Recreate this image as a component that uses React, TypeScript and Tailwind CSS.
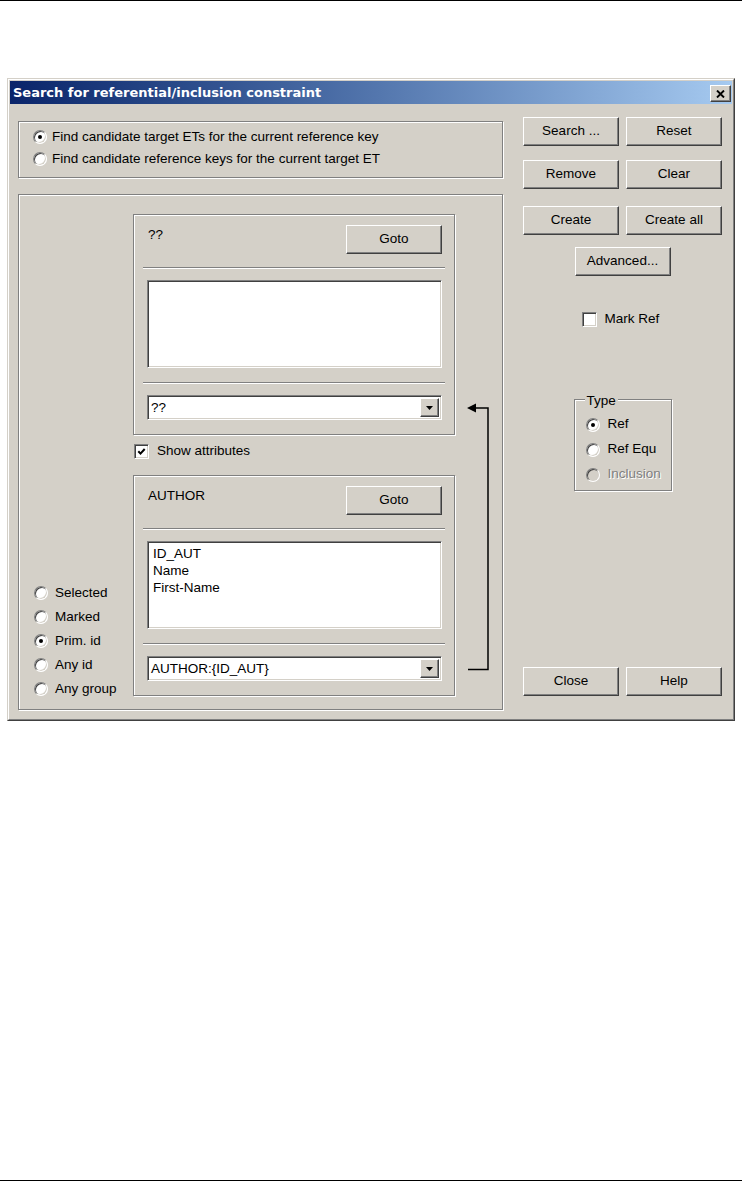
import React from "react";

// classic 3D borders
const raised =
  "border border-white border-r-[#404040] border-b-[#404040] shadow-[inset_-1px_-1px_0_#808080] bg-[#d4d0c8]";
const sunken =
  "border border-[#808080] border-r-white border-b-white shadow-[inset_1px_1px_0_#404040,inset_-1px_-1px_0_#d4d0c8]";
const etched = "border border-[#808080] shadow-[inset_1px_1px_0_#fff,1px_1px_0_#fff]";

const Btn: React.FC<{ children: React.ReactNode; className?: string }> = ({ children, className = "" }) => (
  <button
    type="button"
    className={`${raised} flex h-[29px] w-[96px] shrink-0 items-center justify-center text-[13.5px] text-black ${className}`}
  >
    {children}
  </button>
);

const Radio: React.FC<{ checked?: boolean; disabled?: boolean }> = ({ checked = false, disabled = false }) => (
  <span
    className={`flex h-[14px] w-[14px] shrink-0 items-center justify-center rounded-full border border-[#808080] border-r-white border-b-white shadow-[inset_1px_1px_0_#404040,inset_-1px_-1px_0_#d4d0c8] ${
      disabled ? "bg-[#d4d0c8]" : "bg-white"
    }`}
  >
    {checked && <span className="h-[4px] w-[4px] rounded-full bg-black" />}
  </span>
);

const Check: React.FC<{ checked?: boolean }> = ({ checked = false }) => (
  <span className={`${sunken} flex h-[15px] w-[15px] shrink-0 items-center justify-center bg-white`}>
    {checked && (
      <svg width="9" height="9" viewBox="0 0 9 9">
        <polyline points="1.3,4.2 3.5,6.6 7.7,2" fill="none" stroke="#000" strokeWidth="2" />
      </svg>
    )}
  </span>
);

const Combo: React.FC<{ value: string }> = ({ value }) => (
  <div className={`${sunken} ml-[13px] mt-[11px] flex h-[25px] w-[295px] items-stretch bg-white p-[2px]`}>
    <span className="flex flex-1 items-center pl-[1px] leading-none">{value}</span>
    <span className={`${raised} flex w-[19px] items-center justify-center`}>
      <svg width="7" height="4" viewBox="0 0 7 4">
        <polygon points="0,0 7,0 3.5,4" fill="#000" />
      </svg>
    </span>
  </div>
);

const Separator: React.FC = () => (
  <div className="ml-[9px] mr-[9px] h-[2px] border-t border-b border-t-[#808080] border-b-white" />
);

const Panel: React.FC<{ title: string; items: string[]; combo: string }> = ({ title, items, combo }) => (
  <div className={`${etched} flex h-[221px] w-[322px] shrink-0 flex-col`}>
    <div className="flex items-start justify-between pl-[14px] pr-[12px] pt-[10px]">
      <span className="mt-[2px] leading-[16px]">{title}</span>
      <Btn className="w-[95px]">Goto</Btn>
    </div>
    <div className="mt-[13px]">
      <Separator />
    </div>
    <div className={`${sunken} ml-[13px] mt-[11px] h-[88px] w-[295px] bg-white pl-[5px] pt-[3px]`}>
      {items.map((it) => (
        <div key={it} className="leading-[17px]">
          {it}
        </div>
      ))}
    </div>
    <div className="mt-[14px]">
      <Separator />
    </div>
    <Combo value={combo} />
  </div>
);

export default function App() {
  return (
    <div className="flex h-[1181px] w-full flex-col bg-white font-['Liberation_Sans',Arial,sans-serif] text-[13.5px] text-black">
      <div className="h-[1px] w-full shrink-0 bg-black" />

      {/* Dialog window */}
      <div className="ml-[7px] mt-[77px] w-[728px] border border-[#d4d0c8] border-r-[#404040] border-b-[#404040]">
        <div className="border border-white border-r-[#808080] border-b-[#808080] bg-[#d4d0c8] p-[1px]">
          {/* Title bar */}
          <div className="flex h-[23px] items-center justify-between bg-gradient-to-r from-[#0a246a] to-[#a6caf0] pl-[3px] pr-[1px]">
            <span className="font-['DejaVu_Sans',sans-serif] text-[13px] font-bold text-white">
              Search for referential/inclusion constraint
            </span>
            <button type="button" className={`${raised} mt-[2px] flex h-[17px] w-[21px] items-center justify-center`}>
              <svg width="9" height="8" viewBox="0 0 9 8">
                <path d="M1 0.5 L8 7.5 M8 0.5 L1 7.5" stroke="#000" strokeWidth="1.9" />
              </svg>
            </button>
          </div>

          {/* Body */}
          <div className="flex pb-[8px] pl-[8px] pr-[10px]">
            {/* Left column */}
            <div className="flex w-[485px] shrink-0 flex-col pt-[17px]">
              <div className={`${etched} flex h-[57px] flex-col pl-[14px] pt-[4px]`}>
                <div className="flex h-[22px] items-center gap-[5px]">
                  <Radio checked />
                  <span>Find candidate target ETs for the current reference key</span>
                </div>
                <div className="flex h-[22px] items-center gap-[5px]">
                  <Radio />
                  <span>Find candidate reference keys for the current target ET</span>
                </div>
              </div>

              <div className={`${etched} mt-[16px] flex h-[516px]`}>
                {/* selection radios */}
                <div className="flex w-[114px] shrink-0 flex-col justify-end pb-[8px] pl-[15px]">
                  {[
                    ["Selected", false],
                    ["Marked", false],
                    ["Prim. id", true],
                    ["Any id", false],
                    ["Any group", false],
                  ].map(([label, on]) => (
                    <div key={label as string} className="flex h-[24px] items-center gap-[7px]">
                      <Radio checked={on as boolean} />
                      <span>{label as string}</span>
                    </div>
                  ))}
                </div>

                {/* panels */}
                <div className="flex w-[322px] shrink-0 flex-col pt-[19px]">
                  <Panel title="??" items={[]} combo="??" />
                  <div className="flex h-[40px] items-center gap-[8px] pb-[8px] pl-[1px]">
                    <Check checked />
                    <span>Show attributes</span>
                  </div>
                  <Panel title="AUTHOR" items={["ID_AUT", "Name", "First-Name"]} combo="AUTHOR:{ID_AUT}" />
                </div>

                {/* link arrow */}
                <div className="w-[47px] shrink-0 pt-[19px]">
                  <svg width="47" height="482" viewBox="0 0 47 482">
                    <polygon points="12,194 21,189.5 21,198.5" fill="#000" />
                    <path d="M20 194 H33 V455.5 H13" fill="none" stroke="#000" strokeWidth="1.5" />
                  </svg>
                </div>
              </div>
            </div>

            {/* Right column */}
            <div className="ml-[20px] flex w-[199px] shrink-0 flex-col items-center pt-[13px]">
              <div className="flex gap-[7px]">
                <Btn>Search ...</Btn>
                <Btn>Reset</Btn>
              </div>
              <div className="mt-[14px] flex gap-[7px]">
                <Btn>Remove</Btn>
                <Btn>Clear</Btn>
              </div>
              <div className="mt-[17px] flex gap-[7px]">
                <Btn>Create</Btn>
                <Btn>Create all</Btn>
              </div>
              <Btn className="mt-[12px]">Advanced...</Btn>

              <div className="mt-[35px] flex h-[16px] items-center gap-[8px] pr-[4px]">
                <Check />
                <span>Mark Ref</span>
              </div>

              <div className={`${etched} relative mt-[72px] flex h-[92px] w-[98px] flex-col pl-[11px] pt-[12px]`}>
                <span className="absolute -top-[7px] left-[10px] bg-[#d4d0c8] px-[2px] leading-[16px]">Type</span>
                <div className="flex h-[25px] items-center gap-[8px]">
                  <Radio checked />
                  <span>Ref</span>
                </div>
                <div className="flex h-[25px] items-center gap-[8px]">
                  <Radio />
                  <span>Ref Equ</span>
                </div>
                <div className="flex h-[25px] items-center gap-[8px]">
                  <Radio disabled />
                  <span className="text-[#808080] [text-shadow:1px_1px_0_#fff]">Inclusion</span>
                </div>
              </div>

              <div className="mt-[176px] flex gap-[7px]">
                <Btn>Close</Btn>
                <Btn>Help</Btn>
              </div>
            </div>
          </div>
        </div>
      </div>

      <div className="mt-auto h-[1px] w-full shrink-0 bg-black" />
    </div>
  );
}
